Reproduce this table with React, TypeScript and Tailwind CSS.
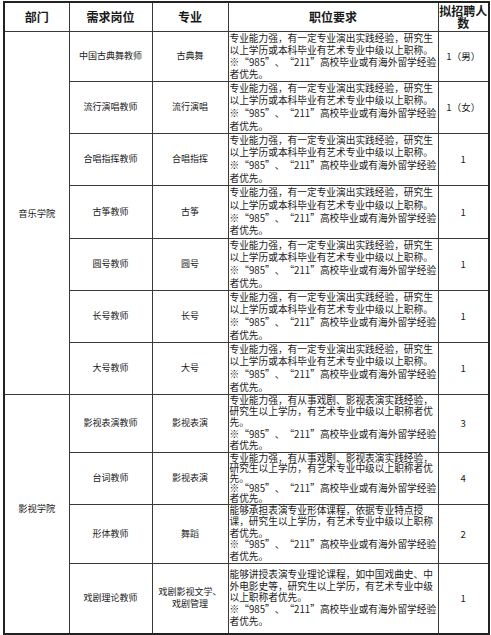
const FONT = { fontFamily: '"Noto Sans CJK SC", "Noto Sans", sans-serif' };

// curly quotes in Noto SC are narrow; the reference shows them full width
function Q({ open }: { open?: boolean }) {
  return (
    <span className={`inline-block w-[1em] ${open ? 'text-right' : 'text-left'}`}>{open ? '“' : '”'}</span>
  );
}

const QUOTE_LINE = (
  <>
    ※<Q open />985<Q />、<Q open />211<Q />高校毕业或有海外留学经验
  </>
);

const MUSIC_REQ = [
  '专业能力强，有一定专业演出实践经验，研究生',
  '以上学历或本科毕业有艺术专业中级以上职称。',
  QUOTE_LINE,
  '者优先。',
];

const FILM_REQ = [
  '专业能力强，有从事戏剧、影视表演实践经验，',
  '研究生以上学历，有艺术专业中级以上职称者优',
  '先。',
  QUOTE_LINE,
  '者优先。',
];

interface Row {
  dept?: { name: string; span: number };
  post: string;
  major: string[];
  req: React.ReactNode[];
  count: string;
  h: number;
  lead: string;
}

const rows: Row[] = [
  { dept: { name: '音乐学院', span: 7 }, post: '中国古典舞教师', major: ['古典舞'], req: MUSIC_REQ, count: '1（男）', h: 50, lead: 'leading-[12.2px]' },
  { post: '流行演唱教师', major: ['流行演唱'], req: MUSIC_REQ, count: '1（女）', h: 52, lead: 'leading-[12.6px]' },
  { post: '合唱指挥教师', major: ['合唱指挥'], req: MUSIC_REQ, count: '1', h: 52, lead: 'leading-[12.6px]' },
  { post: '古筝教师', major: ['古筝'], req: MUSIC_REQ, count: '1', h: 53, lead: 'leading-[12.6px]' },
  { post: '圆号教师', major: ['圆号'], req: MUSIC_REQ, count: '1', h: 52, lead: 'leading-[12.6px]' },
  { post: '长号教师', major: ['长号'], req: MUSIC_REQ, count: '1', h: 52, lead: 'leading-[12.6px]' },
  { post: '大号教师', major: ['大号'], req: MUSIC_REQ, count: '1', h: 52, lead: 'leading-[12.6px]' },
  { dept: { name: '影视学院', span: 4 }, post: '影视表演教师', major: ['影视表演'], req: FILM_REQ, count: '3', h: 58, lead: 'leading-[11.2px]' },
  { post: '台词教师', major: ['影视表演'], req: FILM_REQ, count: '4', h: 52, lead: 'leading-[10.1px]' },
  {
    post: '形体教师',
    major: ['舞蹈'],
    req: [
      '能够承担表演专业形体课程，依据专业特点授',
      '课，研究生以上学历，有艺术专业中级以上职称',
      '者优先。',
      QUOTE_LINE,
      '者优先。',
    ],
    count: '2',
    h: 59,
    lead: 'leading-[11.4px]',
  },
  {
    post: '戏剧理论教师',
    major: ['戏剧影视文学、', '戏剧管理'],
    req: [
      '能够讲授表演专业理论课程，如中国戏曲史、中',
      '外电影史等，研究生以上学历，有艺术专业中级',
      '以上职称者优先。',
      QUOTE_LINE,
      '者优先。',
    ],
    count: '1',
    h: 71,
    lead: 'leading-[11.6px]',
  },
];

const cell = 'border border-[#3a3a3a] p-0 align-middle';

export default function App() {
  return (
    <div className="w-[491px] h-[635px] bg-white overflow-hidden pt-px pl-[3px] text-[#1a1a1a]" style={FONT}>
      <table className="table-fixed border-collapse border-2 border-[#222] w-[485px]">
        <colgroup>
          <col className="w-[65px]" />
          <col className="w-[83px]" />
          <col className="w-[76px]" />
          <col className="w-[210px]" />
          <col className="w-[51px]" />
        </colgroup>
        <thead>
          <tr className="h-[29px] text-[12px] font-bold leading-[12px]">
            <th className={`${cell} text-center`}>部门</th>
            <th className={`${cell} text-center`}>需求岗位</th>
            <th className={`${cell} text-center`}>专业</th>
            <th className={`${cell} text-center`}>职位要求</th>
            <th className={`${cell} text-center`}>
              拟招聘人
              <br />数
            </th>
          </tr>
        </thead>
        <tbody>
          {rows.map((r, i) => (
            <tr key={i} style={{ height: r.h }}>
              {r.dept && (
                <td rowSpan={r.dept.span} className={`${cell} text-center text-[9.3px] leading-[12px]`}>
                  <div className={r.dept.span === 4 ? 'mb-[12px]' : ''}>{r.dept.name}</div>
                </td>
              )}
              <td className={`${cell} text-center text-[9px] leading-[12px]`}>{r.post}</td>
              <td className={`${cell} text-center text-[9px] leading-[12px]`}>
                {r.major.map((m) => (
                  <div key={m}>{m}</div>
                ))}
              </td>
              <td className={`${cell} pl-px text-[9.7px] ${r.lead} whitespace-nowrap overflow-hidden`}>
                {r.req.map((line, j) => (
                  <div key={j}>{line}</div>
                ))}
              </td>
              <td className={`${cell} text-center text-[9.5px] leading-[12px]`}>{r.count}</td>
            </tr>
          ))}
        </tbody>
      </table>
    </div>
  );
}
